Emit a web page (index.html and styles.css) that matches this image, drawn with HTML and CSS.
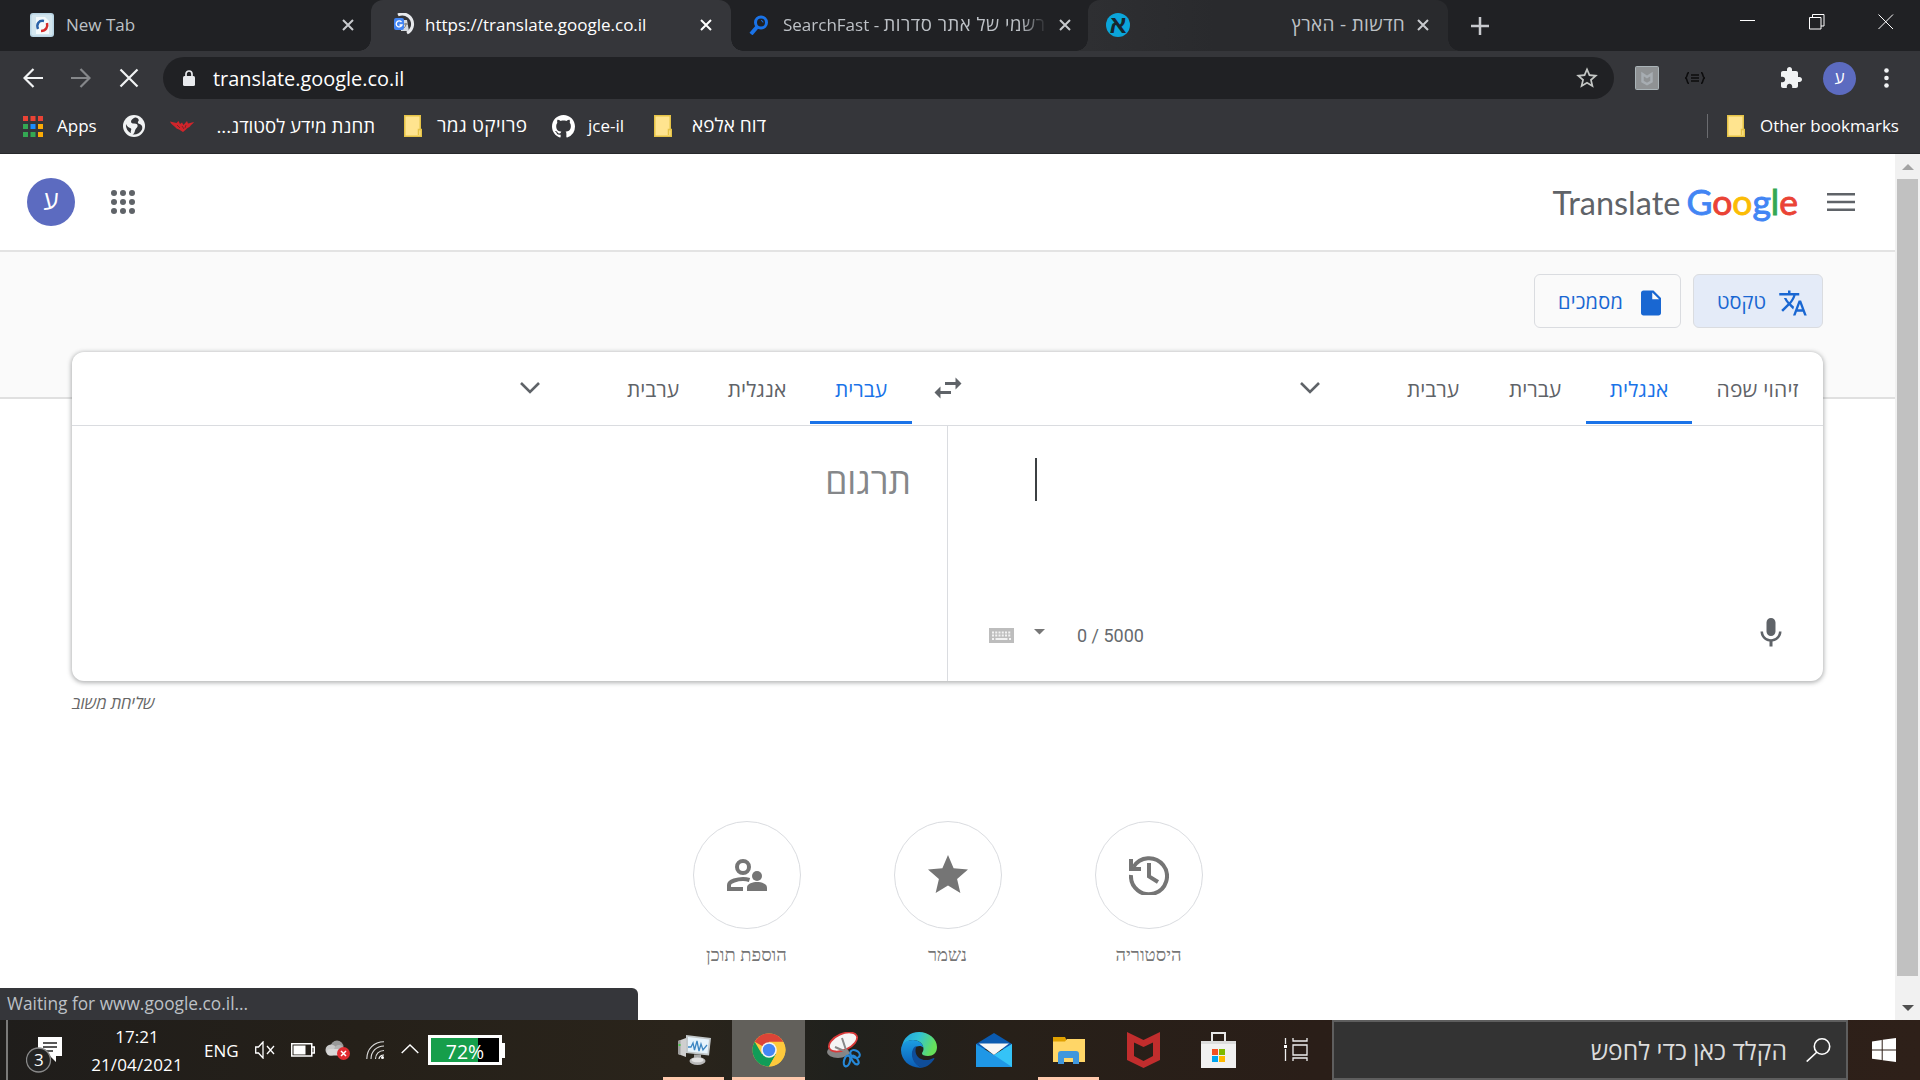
FILE: index.html
```html
<!DOCTYPE html>
<html lang="he">
<head>
<meta charset="utf-8">
<title>Google Translate</title>
<link rel="stylesheet" href="styles.css">
</head>
<body>
<header class="browser">
  <div class="tabstrip">
    <div class="tab tab-first">
      <svg class="fav24" viewBox="0 0 24 24"><rect width="24" height="24" rx="3" fill="#b9d5e4"/><rect x="1.500" y="1.500" width="21" height="21" rx="2" fill="#d3e6ef"/><path d="M6 4h9l4 4v13H6z" fill="#f4fafc"/><path d="M8 16c-2-5 1-9 6-8" fill="none" stroke="#2a62a8" stroke-width="2.500"/><path d="M17 10c1 4-1 8-6 8" fill="none" stroke="#d42b2b" stroke-width="2.500"/></svg>
      <span class="tab-title t-new">New Tab</span>
      <svg class="x" viewBox="0 0 12 12"><path d="M1 1l10 10M11 1L1 11"/></svg>
    </div>
    <div class="tab tab-active">
      <svg class="fav24" viewBox="0 0 24 24"><path d="M6 2a10 10 0 0 1 9 18" fill="none" stroke="#e8eaed" stroke-width="3"/><path d="M9 7h6l2 11H9z" fill="#d5d9de"/><rect x="2" y="5" width="10" height="12" rx="2" fill="#4285f4"/><path d="M9.500 9a3 3 0 1 0 .5 3H7.500" fill="none" stroke="#fff" stroke-width="1.300"/><path d="M12 11h4m-2-1c0 3-1 4-2 5" fill="none" stroke="#777" stroke-width="1"/></svg>
      <span class="tab-title t-url">https://translate.google.co.il</span>
      <svg class="x" viewBox="0 0 12 12"><path d="M1 1l10 10M11 1L1 11"/></svg>
    </div>
    <div class="tab tab-third">
      <svg class="fav20" viewBox="0 0 20 20"><circle cx="12" cy="7.500" r="5.500" fill="none" stroke="#1a73e8" stroke-width="3"/><path d="M8 12l-6 7" stroke="#1a73e8" stroke-width="4"/><path d="M12 5.500a2 2 0 0 1 2 2" stroke="#1a73e8" fill="none"/></svg>
      <span class="tab-title t-sf" dir="ltr">SearchFast - <bdi>רשמי של אתר סדרות</bdi></span>
      <svg class="x" viewBox="0 0 12 12"><path d="M1 1l10 10M11 1L1 11"/></svg>
    </div>
    <div class="tab tab-fourth">
      <span class="haaretz">א</span>
      <span class="tab-title t-ha" dir="rtl">חדשות - הארץ</span>
      <svg class="x" viewBox="0 0 12 12"><path d="M1 1l10 10M11 1L1 11"/></svg>
    </div>
    <svg class="plus" viewBox="0 0 18 18"><path d="M9 0v18M0 9h18"/></svg>
    <div class="winctl">
      <svg viewBox="0 0 16 16"><path d="M0 6.500h15"/></svg>
      <svg viewBox="0 0 16 16"><path d="M.5 3.500h11.500v11.500H.500zM3.500 3.500V.500h11.500v11.500H12"/></svg>
      <svg viewBox="0 0 16 16"><path d="M.5.500l14.500 14.500M15 .500L.5 15"/></svg>
    </div>
  </div>
  <div class="toolbar">
    <div class="nav">
      <svg viewBox="0 0 20 20"><path d="M20 10H2M10.500 1L1.500 10l9 9"/></svg>
      <svg class="dim" viewBox="0 0 20 20"><path d="M0 10h18M9.500 1l9 9-9 9"/></svg>
      <svg viewBox="0 0 20 20"><path d="M1.500 1.500l17 17M18.500 1.500l-17 17"/></svg>
    </div>
    <div class="omnibox">
      <svg class="lock" viewBox="0 0 12 16"><rect y="6" width="12" height="10" rx="1.500" fill="#e8eaed"/><path d="M3 7V4a3 3 0 0 1 6 0v3" fill="none" stroke="#e8eaed" stroke-width="1.700"/></svg>
      <span class="t-omni">translate.google.co.il</span>
      <svg class="star" viewBox="0 0 24 24"><path fill="#c4c7c5" d="M22 9.240l-7.190-.62L12 2 9.190 8.630 2 9.240l5.460 4.730L5.820 21 12 17.270 18.180 21l-1.630-7.030L22 9.240zM12 15.400l-3.760 2.270 1-4.280-3.320-2.880 4.380-.38L12 6.100l1.710 4.040 4.380.38-3.320 2.880 1 4.280L12 15.400z"/></svg>
    </div>
    <svg class="ext1" viewBox="0 0 24 24"><rect x=".5" y=".5" width="23" height="23" rx="1" fill="#8f9294" stroke="#aab4b8"/><path d="M7.500 8l4.500 3 4.500-3v7.500L12 18l-4.500-2.500z" fill="none" stroke="#a7adb2" stroke-width="2.500"/></svg>
    <svg class="ext2" viewBox="0 0 20 12"><path d="M4 .500C1.500.500 3 5 .5 6 3 7 1.500 11.500 4 11.500M16 .500c2.500 0 1 4.500 3.500 5.500-2.500 1-1 5.500-3.500 5.500M6 3h8M6 6h8M6 9h8" fill="none" stroke="#0c0c0d" stroke-width="1.600"/></svg>
    <svg class="puzzle" viewBox="0 0 24 24"><path fill="#f1f3f4" d="M20.500 11H19V7c0-1.100-.9-2-2-2h-4V3.500C13 2.120 11.880 1 10.500 1S8 2.120 8 3.500V5H4c-1.100 0-1.990.9-1.990 2v3.800H3.500c1.490 0 2.700 1.210 2.700 2.700s-1.210 2.700-2.700 2.700H2V20c0 1.100.9 2 2 2h3.800v-1.500c0-1.490 1.210-2.700 2.700-2.700 1.490 0 2.700 1.210 2.700 2.700V22H17c1.100 0 2-.9 2-2v-4h1.500c1.380 0 2.500-1.120 2.500-2.500S21.880 11 20.500 11z"/></svg>
    <span class="avatar small">ע</span>
    <svg class="dots" viewBox="0 0 5 20"><g fill="#f1f3f4"><circle cx="2.500" cy="2.500" r="2.300"/><circle cx="2.500" cy="10" r="2.300"/><circle cx="2.500" cy="17.500" r="2.300"/></g></svg>
  </div>
  <div class="bookmarks">
    <svg class="bm-apps" viewBox="0 0 20 21"><path d="M0 0h5v5H0zM7.500 0h5v5h-5zM15 0h5v5h-5z" fill="#ea4335"/><path d="M0 8h5v5H0zM0 16h5v5H0zM7.500 16h5v5h-5z" fill="#34a853"/><path d="M7.500 8h5v5h-5z" fill="#1a8cff"/><path d="M15 8h5v5h-5zM15 16h5v5h-5z" fill="#fbab05"/></svg>
    <span class="t-apps">Apps</span>
    <svg class="bm-globe" viewBox="0 0 22 22"><circle cx="11" cy="11" r="11" fill="#f1f3f4"/><path d="M12 2.500c-2 1-4 2-4 4 0 1.500 1 2 3 2 3 0 4 1 3.500 3-.5 1.500-2 2-2.500 4-.5 2-1 3.500-2.500 4 4 .5 8-1.500 9.500-5 1-3-.5-5-2.500-5.500s-2-2-1-3c1-1-.5-3.500-3.500-3.500z" fill="#35363a"/><path d="M3 9c1 3 3 3.500 5 4.500 1 1-1 2.500 0 4.500-3-1-5.500-5-5-9z" fill="#35363a"/></svg>
    <svg class="bm-red" viewBox="0 0 24 12"><path d="M0 1.500l6.500 1.500 2-2 1.500 3 2-1.500 1.500 2.500L17 1l1 2.500 6-1.500c-1 2-3 2.500-4 4.500-1 1-3 1.500-4 3L13 12l-4-2.500c-2-.5-3-1.500-4.500-3C3 5 1 4.500 0 1.500z" fill="#d0252b"/><path d="M7 5l3 3M12 6l2 3M16 5l-1 3" stroke="#7d2427" fill="none"/></svg>
    <span class="t-b1" dir="rtl">תחנת מידע לסטודנ...</span>
    <svg class="folder" viewBox="0 0 18 22"><path d="M.75.75h15.500V14.500h1v6.750H.750z" fill="#ffe48f" stroke="#e5c347" stroke-width="1.500"/><path d="M14.500 20v-5.500h2.500" fill="none" stroke="#e5c347" stroke-width="1.500"/></svg>
    <span class="t-b2" dir="rtl">פרויקט גמר</span>
    <svg class="bm-gh" viewBox="0 0 16 16"><path fill="#fff" d="M8 0C3.580 0 0 3.580 0 8c0 3.540 2.290 6.530 5.470 7.590.4.070.55-.17.55-.38 0-.19-.01-.82-.01-1.490-2.010.37-2.530-.49-2.690-.94-.09-.23-.48-.94-.82-1.130-.28-.15-.68-.52-.01-.53.63-.01 1.080.58 1.230.82.72 1.210 1.870.87 2.330.66.070-.52.28-.87.510-1.070-1.780-.2-3.640-.89-3.640-3.950 0-.87.310-1.590.82-2.150-.08-.2-.36-1.020.080-2.120 0 0 .67-.21 2.200.82.640-.18 1.320-.27 2-.27.680 0 1.360.090 2 .27 1.530-1.040 2.200-.82 2.200-.82.440 1.100.160 1.920.080 2.120.51.560.82 1.270.82 2.150 0 3.070-1.870 3.750-3.650 3.950.290.250.54.730.54 1.480 0 1.070-.01 1.930-.01 2.200 0 .21.150.46.550.38A8.010 8.010 0 0 0 16 8c0-4.420-3.580-8-8-8z"/></svg>
    <span class="t-b3">jce-il</span>
    <svg class="folder f2" viewBox="0 0 18 22"><path d="M.75.75h15.500V14.500h1v6.750H.750z" fill="#ffe48f" stroke="#e5c347" stroke-width="1.500"/><path d="M14.500 20v-5.500h2.500" fill="none" stroke="#e5c347" stroke-width="1.500"/></svg>
    <span class="t-b4" dir="rtl">דוח אלפא</span>
    <i class="bm-sep"></i>
    <svg class="folder f3" viewBox="0 0 18 22"><path d="M.75.75h15.500V14.500h1v6.750H.750z" fill="#ffe48f" stroke="#e5c347" stroke-width="1.500"/><path d="M14.500 20v-5.500h2.500" fill="none" stroke="#e5c347" stroke-width="1.500"/></svg>
    <span class="t-b5">Other bookmarks</span>
  </div>
</header>

<div class="viewport">
  <main class="page" dir="rtl">
    <div class="gbar">
      <svg class="burger" viewBox="0 0 28 18"><path d="M0 1.300h28M0 9h28M0 16.700h28" stroke="#5f6368" stroke-width="2.600"/></svg>
      <span class="logo" dir="ltr"><span class="t-tr">Translate</span><span class="goog"><b class="c1">G</b><b class="c2">o</b><b class="c3">o</b><b class="c1">g</b><b class="c4">l</b><b class="c2">e</b></span></span>
      <svg class="launcher" viewBox="0 0 24 24"><g fill="#5f6368"><circle cx="3" cy="3" r="3"/><circle cx="12" cy="3" r="3"/><circle cx="21" cy="3" r="3"/><circle cx="3" cy="12" r="3"/><circle cx="12" cy="12" r="3"/><circle cx="21" cy="12" r="3"/><circle cx="3" cy="21" r="3"/><circle cx="12" cy="21" r="3"/><circle cx="21" cy="21" r="3"/></g></svg>
      <span class="avatar large">ע</span>
    </div>
    <div class="modes">
      <div class="mode on"><svg viewBox="0 0 24 24"><path fill="#1967d2" d="M12.870 15.070l-2.540-2.510.03-.03c1.740-1.940 2.980-4.170 3.710-6.530H17V4h-7V2H8v2H1v1.990h11.170C11.500 7.920 10.440 9.750 9 11.350 8.070 10.320 7.300 9.190 6.690 8h-2c.73 1.630 1.730 3.170 2.980 4.560l-5.090 5.020L4 19l5-5 3.110 3.110.76-2.040zM18.500 10h-2L12 22h2l1.120-3h4.750L21 22h2l-4.500-12zm-2.620 7l1.620-4.330L19.120 17h-3.240z"/></svg><span class="t-m1">טקסט</span></div>
      <div class="mode docs"><svg viewBox="0 0 24 24"><path fill="#1967d2" d="M6 2c-1.100 0-1.990.9-1.990 2L4 20c0 1.100.89 2 1.990 2H18c1.100 0 2-.9 2-2V8l-6-6H6zm7 7V3.500L18.500 9H13z"/></svg><span class="t-m2">מסמכים</span></div>
    </div>
    <section class="card">
      <div class="langs">
        <div class="lang-src">
          <span class="lang w131"><span class="t-l0">זיהוי שפה</span></span>
          <span class="lang w106 sel"><span class="t-l1">אנגלית</span></span>
          <span class="lang w102"><span class="t-l2">עברית</span></span>
          <span class="lang w102"><span class="t-l3">ערבית</span></span>
          <span class="lang w144"><svg class="chev" viewBox="0 0 20 12"><path d="M1 1l9 9 9-9"/></svg></span>
        </div>
        <div class="swap"><svg viewBox="0 0 24 24"><path fill="#5f6368" d="M6.990 11L3 15l3.990 4v-3H14v-2H6.990v-3zM21 9l-3.990-4v3H10v2h7.010v3L21 9z"/></svg></div>
        <div class="lang-dst">
          <span class="lang w102 sel"><span class="t-l4">עברית</span></span>
          <span class="lang w106"><span class="t-l5">אנגלית</span></span>
          <span class="lang w102"><span class="t-l6">ערבית</span></span>
          <span class="lang w144"><svg class="chev" viewBox="0 0 20 12"><path d="M1 1l9 9 9-9"/></svg></span>
        </div>
      </div>
      <div class="panes">
        <div class="pane-src" dir="ltr">
          <i class="caret"></i>
          <div class="tools">
            <svg class="kbd" viewBox="0 0 25 15"><rect width="25" height="15" fill="#bdbdbd"/><path d="M3 4.500h19M3 7.500h19" stroke="#f2f2f2" stroke-width="2" stroke-dasharray="2 1.250"/><path d="M3 11h2M6.500 11h12M20 11h2" stroke="#f2f2f2" stroke-width="2"/></svg>
            <svg class="drop" viewBox="0 0 11 6"><path d="M0 0h11L5.500 5.500z" fill="#777"/></svg>
            <span class="t-cnt">0 / 5000</span>
            <svg class="mic" viewBox="0 0 24 24"><path fill="#5f6368" d="M12 14c1.660 0 2.990-1.340 2.990-3L15 5c0-1.660-1.340-3-3-3S9 3.340 9 5v6c0 1.660 1.340 3 3 3zm5.300-3c0 3-2.540 5.100-5.300 5.100S6.700 14 6.700 11H5c0 3.410 2.720 6.230 6 6.720V21h2v-3.280c3.280-.48 6-3.300 6-6.720h-1.700z"/></svg>
          </div>
        </div>
        <div class="pane-dst"><span class="t-ph">תרגום</span></div>
      </div>
    </section>
    <div class="feedback"><span class="t-fb">שליחת משוב</span></div>
    <div class="rounds">
      <div class="round"><span class="ring"><svg width="40" height="40" viewBox="0 0 40 40"><path d="M4.500 12A18 18 0 1 1 2 20M2 4v10h10M20 8v13.500l9 5.500" fill="none" stroke="#757575" stroke-width="4"/></svg></span><span class="t-r1">היסטוריה</span></div>
      <div class="round"><span class="ring"><svg width="48" height="48" viewBox="0 0 24 24"><path fill="#757575" d="M12 17.270L18.180 21l-1.640-7.030L22 9.240l-7.190-.61L12 2 9.190 8.630 2 9.240l5.460 4.730L5.820 21z"/></svg></span><span class="t-r2">נשמר</span></div>
      <div class="round"><span class="ring"><svg width="40" height="32" viewBox="0 0 40 32"><circle cx="16" cy="8" r="6" fill="none" stroke="#757575" stroke-width="4"/><path d="M16 30H2v-4c0-4 9-6 14-6 3 0 5 .5 6.500 1" fill="none" stroke="#757575" stroke-width="4"/><circle cx="30" cy="17" r="5" fill="#757575"/><path d="M20 32v-3.500c0-4 6-5.500 10-5.500s10 1.500 10 5.500V32z" fill="#757575"/></svg></span><span class="t-r3">הוספת תוכן</span></div>
    </div>
    <div class="status" dir="ltr"><span class="t-st">Waiting for www.google.co.il...</span></div>
  </main>
  <aside class="scroll">
    <svg viewBox="0 0 12 6"><path d="M0 6h12L6 0z" fill="#a3a3a3"/></svg>
    <i class="thumb"></i>
    <svg viewBox="0 0 12 6"><path d="M0 0h12L6 6z" fill="#505050"/></svg>
  </aside>
</div>

<footer class="taskbar">
  <div class="tray">
    <i class="peek"></i>
    <div class="note"><svg viewBox="0 0 38 38"><path d="M12 2h24v19H30v6l-6-6H12z" fill="#fff"/><path d="M17 8h14M17 12h14M20 16h7" stroke="#222" stroke-width="1.400"/><circle cx="12.500" cy="25" r="12" fill="#242424" stroke="#8a8a8a" stroke-width="1.300"/></svg><span class="t-n3">3</span></div>
    <div class="clock"><span class="t-time">17:21</span><span class="t-date">21/04/2021</span></div>
    <span class="t-eng">ENG</span>
    <svg class="spk" viewBox="0 0 20 18"><path d="M.7 6v6H3.500l4.500 5V1L3.500 6zM12 5l7 8M19 5l-7 8" fill="none" stroke="#fff" stroke-width="1.300"/></svg>
    <svg class="bat" viewBox="0 0 24 14"><path d="M.75.75h20V13H.750zM21 4h2.250v6H21" fill="none" stroke="#fff" stroke-width="1.500"/><path d="M2.500 2.500h12v9h-12z" fill="#fff"/></svg>
    <svg class="cloud" viewBox="0 0 26 20"><circle cx="12" cy="7" r="6.500" fill="#999"/><circle cx="6" cy="10" r="5.500" fill="#c9c9c9"/><circle cx="14" cy="10" r="5" fill="#b4b4b4"/><rect x="2" y="9" width="18" height="6.500" rx="3" fill="#d8d8d8"/><circle cx="18.500" cy="13.500" r="6.500" fill="#e02b31"/><path d="M16 11l5 5M21 11l-5 5" stroke="#fff" stroke-width="1.500"/></svg>
    <svg class="wifi" viewBox="0 0 18 18"><path d="M.8 18C.8 8 8 .8 18 .8M5 18C5 10.500 10.500 5 18 5M9.500 18C9.500 13 13 9.500 18 9.500" fill="none" stroke="#ddd" stroke-width="1.100"/><path d="M13 18c0-2 2-4 5-4" fill="none" stroke="#fff" stroke-width="1.100"/><circle cx="16.500" cy="16.500" r="1.500" fill="#fff"/></svg>
    <svg class="up" viewBox="0 0 18 10"><path d="M.7 9L9 1l8.300 8" fill="none" stroke="#fff" stroke-width="1.400"/></svg>
    <div class="meter"><span class="t-72">72%</span></div>
  </div>
  <div class="apps">
    <div class="app run"><svg width="34" height="30" viewBox="0 0 34 30"><path d="M1 6l8-3v19l-8-3z" fill="#cfcfcf"/><path d="M1 6l2.500-1v15L1 19z" fill="#9d9d9d"/><path d="M9 0l25 3-2 17.500L9 18z" fill="#c2c7c9"/><path d="M11 2l21 2.500-1.500 14L11 16.500z" fill="#e6f3fc"/><path d="M11 12h3l2-4 1.500 7 2.500-9 2 10 2-7 2 6 4-5" fill="none" stroke="#3d86c2" stroke-width="1.300"/><path d="M17 19.500h7V25h-7z" fill="#a8a8a8"/><ellipse cx="20.500" cy="26" rx="8" ry="4" fill="#b9b9b9"/><ellipse cx="20.500" cy="25" rx="6" ry="2.300" fill="#e2e2e2"/><path d="M1.500 9h2v2h-2z" fill="#4c4"/></svg></div>
    <div class="app run current"><svg width="34" height="34" viewBox="0 0 34 34"><circle cx="17" cy="17" r="16.500" fill="#fdc93c"/><path d="M17 17L2.700 8.750A16.500 16.500 0 0 1 31.300 8.750H17z" fill="#dc4437"/><path d="M2.700 8.750A16.500 16.500 0 0 0 17 33.500l7.200-12.400L17 17 9.800 21z" fill="#119c58"/><path d="M17 33.500l7.100-12.400V9h7.300A16.500 16.500 0 0 1 17 33.500z" fill="#fdc93c"/><circle cx="17" cy="17" r="7.800" fill="#f3f3f3"/><circle cx="17" cy="17" r="6.200" fill="#4486f4"/></svg></div>
    <div class="app"><svg width="36" height="36" viewBox="0 0 36 36"><ellipse cx="12" cy="20" rx="11" ry="6" fill="#858585"/><ellipse cx="17" cy="10" rx="15" ry="8" transform="rotate(-24 17 10)" fill="#f5f5f5" stroke="#d93a3a" stroke-width="1.800"/><path d="M16 6l6 18M9 15l16 7" stroke="#888" stroke-width="2"/><ellipse cx="29" cy="22" rx="5" ry="3.500" transform="rotate(25 29 22)" fill="none" stroke="#2688d8" stroke-width="2.200"/><ellipse cx="21" cy="29" rx="3" ry="5.500" transform="rotate(15 21 29)" fill="none" stroke="#2688d8" stroke-width="2.200"/><ellipse cx="29" cy="28" rx="2.500" ry="5" transform="rotate(-35 29 28)" fill="none" stroke="#2688d8" stroke-width="2.200"/></svg></div>
    <div class="app"><svg width="36" height="36" viewBox="0 0 36 36"><defs><linearGradient id="eg" x1="0" y1="0" x2="1" y2=".3"><stop offset="0" stop-color="#1fa0e0"/><stop offset=".5" stop-color="#31c3d5"/><stop offset="1" stop-color="#66e05a"/></linearGradient><linearGradient id="eb" x1="0" y1="0" x2="0" y2="1"><stop offset="0" stop-color="#1b9de2"/><stop offset="1" stop-color="#0b5cb5"/></linearGradient></defs><path d="M1 15C2 6 9 0 18 0c10 0 18 7 18 15 0 6-4 9-9 9-4 0-6-1-6-2.500 0-1.500 1.500-2 1.500-4.500C22.500 11 17 8 12 8 7 8 3 11 1 15z" fill="url(#eg)"/><path d="M0 18c0-7 6-10 12-10 5 0 10 3 10.500 8-1-1.500-2.500-2-4-2-5 0-9 6-6 13 2 5 6 8 9 8.500C10 37 0 29 0 18z" fill="url(#eb)"/><path d="M12 17c-3 6 0 16 9 18.700 5-.7 9-4 12-8.200 1-1.500 0-2-1-1.200C23 31 14 26 14.500 18c.2-2 .5-3 2-4-2 0-3.500 1-4.500 3z" fill="#0f4d99"/></svg></div>
    <div class="app"><svg width="36" height="34" viewBox="0 0 36 34"><path d="M0 11L18 0l18 11v5H0z" fill="#0a5ab0"/><path d="M0 11l18 11L36 11v23H0z" fill="#1f97e6"/><path d="M3 10.500h30l-15 11.500z" fill="#f6f6f6"/><path d="M18 22l18-11v23z" fill="#35c3f7"/></svg></div>
    <div class="app run"><svg width="32" height="27" viewBox="0 0 32 27"><path d="M0 0h12l2 4v6H0z" fill="#e0a100"/><path d="M0 4.500h12L14 2h18v23H0z" fill="#ffd667"/><path d="M5 27V17q0-3 3-3h15q3 0 3 3v10h-6v-6h-9v6z" fill="#3f97dd"/></svg></div>
    <div class="app"><svg width="33" height="36" viewBox="0 0 33 36"><path d="M0 0l16.500 8L33 0v28l-16.500 8L0 28zM7 10.500V24l9.500 5 9.500-5V10.500L16.500 15z" fill="#c12d2d" fill-rule="evenodd"/></svg></div>
    <div class="app"><svg width="35" height="36" viewBox="0 0 35 36"><path d="M11 10V1h13v9" fill="none" stroke="#e8e8e8" stroke-width="2"/><path d="M0 9h35v27H0z" fill="#f1f1f1"/><path d="M0 9h35v3H0z" fill="#dcdcdc"/><path d="M11 17h6v6h-6z" fill="#f25022"/><path d="M18 17h6v6h-6z" fill="#7fba00"/><path d="M11 24h6v6h-6z" fill="#00a4ef"/><path d="M18 24h6v6h-6z" fill="#ffb900"/></svg></div>
    <div class="app view"><svg width="24" height="24" viewBox="0 0 24 24"><path d="M1.500 0v6M1.500 11v12M9 0v3h14V0M9 7h14v10H9zM9 23v-3h14v3" fill="none" stroke="#eee" stroke-width="1.300"/><path d="M0 7h3v3H0z" fill="#fff"/></svg></div>
  </div>
  <div class="search" dir="rtl"><svg viewBox="0 0 25 24"><circle cx="16" cy="8.500" r="7.700" fill="none" stroke="#fff" stroke-width="1.600"/><path d="M11 14L.7 23.500" stroke="#fff" stroke-width="1.700"/></svg><span class="t-se">הקלד כאן כדי לחפש</span></div>
  <div class="start"><svg width="24" height="24" viewBox="0 0 24 24"><path d="M0 3.500L9.700 2v9.500H0zM10.700 1.800L24 0v11.500H10.700zM0 12.500h9.700V22L0 20.700zM10.700 12.500H24V24l-13.300-1.800z" fill="#fff"/></svg></div>
</footer>
</body>
</html>
```
FILE: styles.css
```css
* { box-sizing: border-box; }
body { margin: 0; width: 1920px; height: 1080px; overflow: hidden; background: #fff; font-family: "Open Sans", "Noto Sans", sans-serif; display: flex; flex-direction: column; }
svg { display: block; flex: none; }
span { white-space: nowrap; }

/* browser frame */
.browser { height: 154px; background: #35363a; border-bottom: 1px solid #27282b; color: #fff; flex: none; }
.tabstrip { display: flex; height: 51px; background: #202124; align-items: center; }
.tab { display: flex; align-items: center; height: 51px; font-size: 17px; color: #bdc1c6; position: relative; flex: none; padding-bottom: 2px; }
.tab-first { width: 371px; padding-left: 30px; }
.tab-active { width: 360px; padding-left: 21px; background: #35363a; border-radius: 12px 12px 0 0; color: #fff; }
.tab-third { width: 357px; padding-left: 18px; }
.tab-fourth { width: 360px; padding-left: 18px; background: linear-gradient(90deg, #2e2f32, #292a2d 35%); border-radius: 12px 12px 0 0; }
.tab-active::before, .tab-active::after, .tab-fourth::before, .tab-fourth::after { content: ""; position: absolute; bottom: 0; width: 12px; height: 12px; }
.tab-active::before { left: -12px; background: radial-gradient(circle at 0 0, transparent 11.5px, #35363a 12px); }
.tab-active::after { right: -12px; background: radial-gradient(circle at 100% 0, transparent 11.5px, #35363a 12px); }
.tab-fourth::before { left: -12px; background: radial-gradient(circle at 0 0, transparent 11.5px, #2e2f32 12px); }
.tab-fourth::after { right: -12px; background: radial-gradient(circle at 100% 0, transparent 11.5px, #292a2d 12px); }
.fav24 { width: 24px; height: 24px; }
.fav20 { width: 20px; height: 20px; }
.tab-first .tab-title { margin-left: 12px; }
.tab-active .tab-title { margin-left: 9px; }
.tab-third .tab-title { margin-left: 14px; margin-top: -2px; width: 264px; overflow: hidden; -webkit-mask-image: linear-gradient(90deg, #000 90%, transparent); mask-image: linear-gradient(90deg, #000 90%, transparent); }
.t-sf bdi { font-size: 18.6px; letter-spacing: .5px; }
.tab-fourth .tab-title { margin-left: auto; margin-top: -1px; font-size: 19px; letter-spacing: .3px; }
.x { width: 12px; height: 12px; margin-left: auto; margin-right: 17px; fill: none; stroke: #c8cace; stroke-width: 2; }
.tab-active .x { margin-right: 19px; stroke: #fff; }
.tab-fourth .x { margin-left: 12px; margin-right: 19px; }
.haaretz { width: 24px; height: 24px; border-radius: 50%; background: #0ba5da; color: #17252d; font: bold 25px/23px "Liberation Sans", sans-serif; text-align: center; }
.plus { width: 18px; height: 18px; margin-left: 23px; stroke: #c8cace; stroke-width: 2.500; }
.winctl { display: flex; gap: 53px; margin-left: auto; padding: 0 26px 8px 0; }
.winctl svg { width: 16px; height: 16px; fill: none; stroke: #fff; stroke-width: 1; }

.toolbar { display: flex; align-items: center; height: 54px; }
.nav { display: flex; gap: 28px; margin-left: 23px; width: 140px; }
.nav svg { width: 20px; height: 20px; fill: none; stroke: #f1f3f4; stroke-width: 2.200; }
.nav .dim { stroke: #85878a; }
.omnibox { width: 1451px; height: 42px; border-radius: 21px; background: #202124; display: flex; align-items: center; padding: 0 14px 0 20px; font-size: 19.9px; }
.lock { width: 12px; height: 16px; margin-right: 18px; }
.star { width: 26px; height: 26px; margin-left: auto; }
.ext1 { width: 24px; height: 24px; margin-left: 21px; }
.ext2 { width: 20px; height: 12px; margin-left: 26px; }
.puzzle { width: 24px; height: 24px; margin-left: 74px; }
.avatar { border-radius: 50%; background: #5c6bc0; color: #fff; text-align: center; display: block; }
.small { width: 33px; height: 33px; margin-left: 20px; font-size: 17px; line-height: 31px; }
.dots { width: 5px; height: 20px; margin-left: 28px; }

.bookmarks { display: flex; align-items: center; height: 42px; font-size: 17px; }
.bookmarks span { margin-top: -2px; }
.bm-apps { width: 20px; height: 21px; margin-left: 23px; margin-right: 14px; }
.t-apps { width: 66px; }
.bm-globe { width: 22px; height: 22px; }
.bm-red { width: 24px; height: 12px; margin: 0 22px 0 25px; }
.t-b1 { width: 188px; text-align: right; padding-right: 29px; font-size: 18.7px; }
.folder { width: 18px; height: 22px; margin-right: 15px; }
.t-b2 { width: 115px; text-align: left; font-size: 19px; letter-spacing: .3px; }
.bm-gh { width: 23px; height: 23px; margin-right: 13px; }
.t-b3 { width: 66px; }
.t-b4 { font-size: 19px; }
.f2 { margin-right: 20px; }
.bm-sep { width: 1px; height: 24px; background: #6b6c70; margin-left: auto; margin-right: 19px; }
.t-b5 { width: 160px; letter-spacing: -.05px; }

/* page */
.viewport { display: flex; height: 866px; flex: none; }
.page { width: 1895px; background: #fff; position: relative; }
.gbar { height: 98px; border-bottom: 2px solid #e3e3e3; display: flex; align-items: center; padding: 0 40px 0 27px; }
.burger { width: 28px; height: 18px; }
.logo { margin-right: 29px; display: flex; align-items: baseline; gap: 6px; font-family: Lato, sans-serif; color: #5f6368; font-size: 32.5px; margin-top: -1px; }
.goog { font-size: 35.5px; }
.goog b { font-weight: 400; -webkit-text-stroke: .9px; }
.c1 { color: #4285f4; } .c2 { color: #ea4335; } .c3 { color: #fbbc05; } .c4 { color: #34a853; }
.launcher { width: 24px; height: 24px; margin-right: auto; }
.large { width: 48px; height: 48px; margin-right: 36px; font-size: 26px; line-height: 44px; }
.modes { height: 147px; background: #fafafa; border-bottom: 2px solid #e0e0e0; display: flex; gap: 12px; padding: 22px 72px 0 0; }
.mode { height: 54px; border: 1px solid #dadce0; border-radius: 6px; display: flex; align-items: center; color: #1967d2; font-size: 20px; width: 130px; padding-right: 14px; gap: 12px; }
.mode.docs { width: 147px; gap: 13px; }
.t-m2 { letter-spacing: .2px; }
.mode svg { width: 30px; height: 30px; margin-top: 3px; }
.mode.on { background: #e4ebf8; }
.card { position: relative; margin: -47px 72px 0; height: 329px; background: #fff; border-radius: 12px; box-shadow: 0 1px 4px 1px rgba(60,64,67,.38); }
.langs { display: flex; height: 74px; border-bottom: 1px solid #dadce0; color: #5f6368; font-size: 21px; }
.lang-src { width: 839px; display: flex; }
.swap { width: 72px; display: flex; align-items: center; justify-content: center; padding-bottom: 2px; }
.swap svg { width: 36px; height: 36px; }
.lang-dst { display: flex; }
.lang { display: flex; align-items: center; justify-content: center; height: 72px; border-bottom: 3px solid transparent; border-top: 3px solid transparent; }
.lang span { padding-top: 1px; }
.t-l0 { letter-spacing: .2px; }
.sel { color: #1a73e8; border-bottom-color: #1a73e8; }
.w131 { width: 131px; } .w106 { width: 106px; } .w102 { width: 102px; } .w144 { width: 144px; }
.chev { width: 20px; height: 12px; fill: none; stroke: #5f6368; stroke-width: 2.600; }
.panes { display: flex; height: 255px; }
.pane-src { width: 876px; border-left: 1px solid #dadce0; padding: 32px 36px 0 41px; }
.caret { display: block; width: 2px; height: 43px; background: #3c4043; margin-left: 46px; }
.tools { display: flex; align-items: center; margin-top: 112px; height: 40px; }
.kbd { width: 25px; height: 15px; margin-top: 4px; }
.drop { width: 11px; height: 6px; margin-left: 20px; margin-bottom: 2px; }
.t-cnt { font-family: Roboto, sans-serif; font-size: 18px; color: #666a6e; margin-left: 32px; margin-top: 5px; }
.mic { width: 36px; height: 36px; margin-left: auto; margin-right: -2px; }
.pane-dst { padding: 28px 36px 0 0; color: #85878a; font-size: 35.5px; line-height: 52px; }
.feedback { text-align: left; padding-left: 72px; margin-top: 10px; font-size: 16.5px; line-height: 24px; font-style: italic; color: #666; }
.rounds { display: flex; justify-content: center; margin-top: 106px; }
.round { width: 201px; display: flex; flex-direction: column; align-items: center; font: 18.4px/24px "Liberation Serif", serif; color: #757575; }
.ring { width: 108px; height: 108px; border: 1px solid #dadce0; border-radius: 50%; display: flex; align-items: center; justify-content: center; margin-bottom: 14px; }
.status { position: absolute; left: 0; bottom: 0; width: 638px; height: 32px; background: #35363a; border-top-right-radius: 6px; color: #bdc1c6; font-size: 17.3px; line-height: 32px; padding-left: 7px; }
.scroll { width: 25px; background: #f1f1f1; display: flex; flex-direction: column; align-items: center; padding: 10px 0 9px; }
.scroll svg { width: 12px; height: 6px; }
.thumb { width: 21px; height: 797px; background: #c1c1c1; margin: 9px 0 auto; }

/* desktop taskbar */
.taskbar { height: 60px; display: flex; background: linear-gradient(90deg, #1f1d1b 0, #252019 360px, #2a241b 680px, #20211d 840px, #272019 1000px, #2a1e18 1320px, #2e2019 1920px); color: #fff; flex: none; }
.tray { width: 656px; display: flex; align-items: center; }
.peek { width: 2px; height: 60px; background: #7b7a78; margin-left: 6px; }
.note { width: 38px; height: 38px; margin-left: 18px; position: relative; margin-top: 7px; }
.t-n3 { position: absolute; left: 8px; top: 14px; font-size: 17px; line-height: 22px; }
.clock { width: 122px; margin-left: 12px; display: flex; flex-direction: column; align-items: center; font-size: 17px; line-height: 28px; padding-top: 1px; }
.t-date { letter-spacing: .15px; }
.t-eng { font-size: 17px; width: 51px; margin-left: 6px; }
.spk { width: 20px; height: 18px; }
.bat { width: 24px; height: 14px; margin-left: 16px; }
.cloud { width: 26px; height: 20px; margin-left: 10px; }
.wifi { width: 18px; height: 18px; margin-left: 15px; }
.up { width: 18px; height: 10px; margin-left: 17px; margin-bottom: 2px; }
.meter { width: 74px; height: 30px; border: 3px solid #fff; margin-left: 9px; background: linear-gradient(90deg, #169e4b 69%, #000 69%); text-align: center; font-size: 19.5px; line-height: 28px; position: relative; }
.meter::after { content: ""; position: absolute; right: -6px; top: 5px; width: 3px; height: 15px; background: #fff; }
.apps { display: flex; width: 676px; }
.app { width: 75px; height: 60px; display: flex; align-items: center; justify-content: center; position: relative; }
.run::after { content: ""; position: absolute; bottom: 0; left: 7px; width: 61px; height: 3px; background: #ffc9ad; }
.current { background: #62605b; background-clip: content-box; padding: 0 1px; }
.current::after { left: 1px; width: 73px; }
.view { padding-left: 5px; }
.search { width: 516px; border: 2px solid #5e5e5e; background: #333; display: flex; align-items: center; padding-right: 15px; font-size: 24.7px; color: #dcdcdc; }
.search svg { width: 25px; height: 24px; margin-left: 19px; }
.start { width: 72px; display: flex; align-items: center; justify-content: center; }
```
